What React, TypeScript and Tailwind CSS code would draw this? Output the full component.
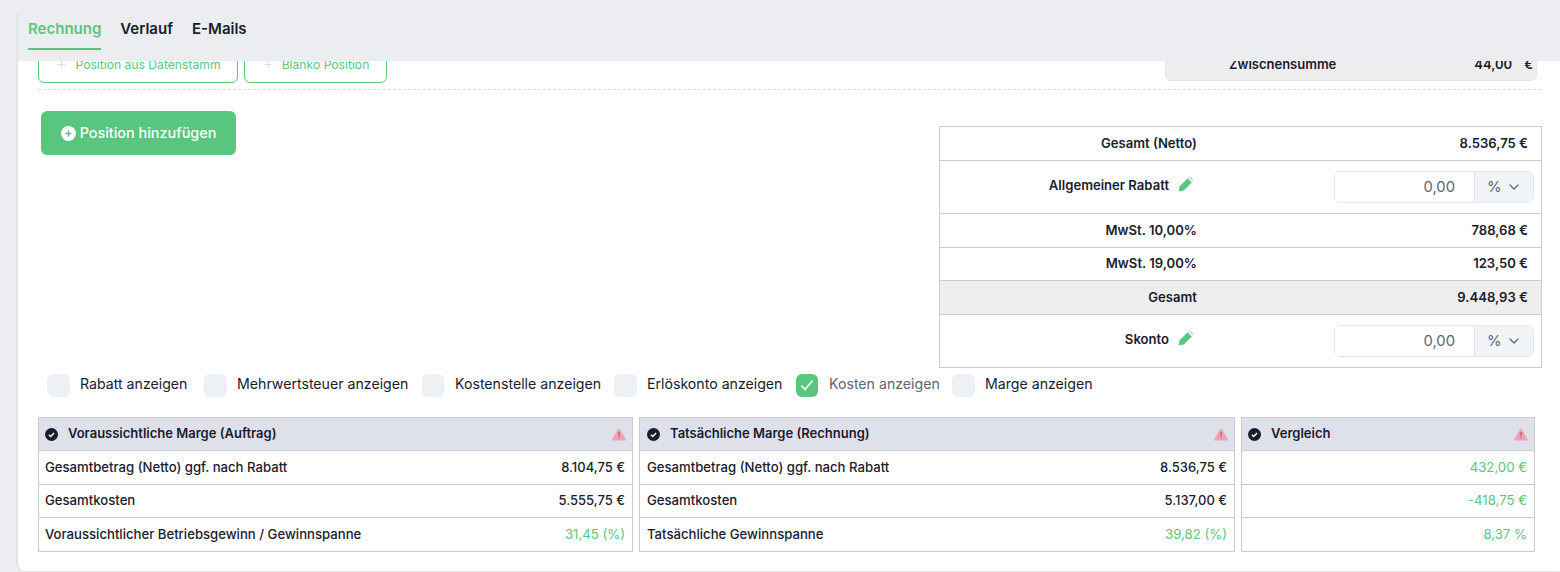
import { ChevronDown, Plus } from 'lucide-react';

const Pencil = () => (
  <svg width="16" height="16" viewBox="0 0 16 16" className="shrink-0">
    <path d="M.6 15.4l1-5.2 8-8 4.2 4.2-8 8z" fill="#59c680" />
    <path d="M10.4 1.6l.6-.6a1.5 1.5 0 0 1 2.1 0l1.9 1.9a1.5 1.5 0 0 1 0 2.1l-.6.6z" fill="#bfe8cd" />
  </svg>
);

const CheckCircle = () => (
  <svg width="13" height="13" viewBox="0 0 13 13" className="shrink-0">
    <circle cx="6.5" cy="6.5" r="6.5" fill="#1a1c2e" />
    <path d="M3.9 6.7l1.8 1.8 3.4-3.6" fill="none" stroke="#fff" strokeWidth="1.4" />
  </svg>
);

const Warning = () => (
  <svg width="14" height="13" viewBox="0 0 14 13" className="shrink-0">
    <path d="M7 .5a.9.9 0 0 1 .8.45l5.9 10.4a.8.8 0 0 1-.7 1.15H1a.8.8 0 0 1-.7-1.15L6.2.95A.9.9 0 0 1 7 .5z" fill="#eea3b5" />
    <rect x="6.5" y="4" width="1.1" height="4" fill="#e8365d" />
    <rect x="6.5" y="9" width="1.1" height="1.2" fill="#e8365d" />
  </svg>
);

const summaryRows = [
  { label: 'Gesamt (Netto)', value: '8.536,75 €', h: 'h-[33px]' },
  { label: 'Allgemeiner Rabatt', input: true, h: 'h-[53px]' },
  { label: 'MwSt. 10,00%', value: '788,68 €', h: 'h-[34px]' },
  { label: 'MwSt. 19,00%', value: '123,50 €', h: 'h-[33px]' },
  { label: 'Gesamt', value: '9.448,93 €', h: 'h-[34px]', grey: true },
  { label: 'Skonto', input: true, h: 'h-[53px]' },
];

const checks = [
  { label: 'Rabatt anzeigen', box: 'w-[23px]', gap: 'gap-[10px]', w: 'w-[157px]' },
  { label: 'Mehrwertsteuer anzeigen', box: 'w-[23px]', gap: 'gap-[10px]', w: 'w-[218px]' },
  { label: 'Kostenstelle anzeigen', box: 'w-[22px]', gap: 'gap-[11px]', w: 'w-[192px]' },
  { label: 'Erlöskonto anzeigen', box: 'w-[23px]', gap: 'gap-[10px]', w: 'w-[182px]' },
  { label: 'Kosten anzeigen', box: 'w-[22px]', gap: 'gap-[11px]', w: 'w-[156px]', on: true },
  { label: 'Marge anzeigen', box: 'w-[23px]', gap: 'gap-[10px]', w: 'w-[160px]' },
];

const marginTables = [
  {
    title: 'Voraussichtliche Marge (Auftrag)',
    pad: 'pl-[6px]',
    rows: [
      ['Gesamtbetrag (Netto) ggf. nach Rabatt', '8.104,75 €'],
      ['Gesamtkosten', '5.555,75 €'],
      ['Voraussichtlicher Betriebsgewinn / Gewinnspanne', '31,45 (%)', true],
    ],
  },
  {
    title: 'Tatsächliche Marge (Rechnung)',
    pad: 'pl-[7px]',
    rows: [
      ['Gesamtbetrag (Netto) ggf. nach Rabatt', '8.536,75 €'],
      ['Gesamtkosten', '5.137,00 €'],
      ['Tatsächliche Gewinnspanne', '39,82 (%)', true],
    ],
  },
  {
    title: 'Vergleich',
    pad: 'pl-[6px]',
    rows: [
      ['', '432,00 €', true],
      ['', '-418,75 €', true],
      ['', '8,37 %', true],
    ],
  },
];

const rowHeights = ['h-[34px]', 'h-[33px]', 'h-[34px]'];

function PercentInput() {
  return (
    <div className="flex h-[32px] w-[200px] overflow-hidden rounded-md border border-[#e4e8ee] text-[14.8px] font-normal text-[#5f6478]">
      <div className="flex flex-1 items-center justify-end bg-white pr-[19px]">0,00</div>
      <div className="flex w-[59px] items-center gap-[4px] border-l border-[#e4e8ee] bg-[#f2f5f8] pl-[12px]">
        %
        <ChevronDown size={16} strokeWidth={1.8} />
      </div>
    </div>
  );
}

export default function App() {
  return (
    <div className="h-[572px] overflow-hidden bg-[#edeef2] pl-[18px] pt-[14px] font-['Inter',sans-serif] text-[#1a1c2e]">
      <div className="h-[557px] rounded-bl-lg bg-white shadow-[-2px_0_2px_rgba(0,0,0,0.05)]">
        <div className="relative z-10 flex h-[47px] items-start gap-[19px] bg-[#ecedf1] pl-[10px] pt-[1px]">
          <div className="border-b-2 border-[#59c680] pb-[9px] pt-[4px] text-[15px] leading-[20px] font-semibold text-[#59c680]">Rechnung</div>
          <div className="pt-[4px] text-[15px] leading-[20px] font-semibold">Verlauf</div>
          <div className="pt-[4px] text-[15px] leading-[20px] font-semibold">E-Mails</div>
        </div>

        <div className="-mt-[21px] flex h-[43px] items-start justify-between pl-[20px] pr-[23px]">
          <div className="flex gap-[6px]">
            <button className="flex h-[43px] w-[200px] items-end justify-center gap-[7px] rounded-md border border-[#59c680] pb-[9px] text-[12.15px] leading-[16px] text-[#59c680]">
              <Plus size={13} strokeWidth={1.3} className="mb-[2px] text-[#b5e5c6]" />
              Position aus Datenstamm
            </button>
            <button className="flex h-[43px] w-[143px] items-end justify-center gap-[7px] rounded-md border border-[#59c680] pb-[9px] text-[12.15px] leading-[16px] text-[#59c680]">
              <Plus size={13} strokeWidth={1.3} className="mb-[2px] text-[#b5e5c6]" />
              Blanko Position
            </button>
          </div>
          <div className="flex h-[41px] w-[372px] items-end rounded-b-md border border-[#e4e6ec] bg-[#eeeeee] pb-[8px] pl-[63px] pr-[3px] text-[13px] leading-[16px] font-semibold">
            <span>Zwischensumme</span>
            <span className="ml-auto mr-[2px]">44,00</span>
            <span className="ml-[10px]">€</span>
          </div>
        </div>

        <div className="ml-[20px] mr-[19px] mt-[6px] border-t border-dashed border-[#d8dde2]" />

        <div className="flex items-start justify-between pl-[23px] pr-[18px] pt-[21px]">
          <button className="flex h-[44px] w-[195px] items-center justify-center gap-[4px] rounded-md bg-[#59c680] text-[14.4px] font-medium text-white">
            <svg width="15" height="15" viewBox="0 0 15 15">
              <circle cx="7.5" cy="7.5" r="7.5" fill="#fff" />
              <path d="M7.5 4.5v6M4.5 7.5h6" stroke="#59c680" strokeWidth="1.5" />
            </svg>
            Position hinzufügen
          </button>

          <div className="mt-[15px] w-[603px] border border-[#cccccc] text-[13.1px] font-semibold">
            {summaryRows.map((row, i) => (
              <div
                key={row.label}
                className={`flex ${row.h} ${i > 0 ? 'border-t border-[#cccccc]' : ''} ${row.grey ? 'bg-[#eeeeee]' : ''} ${row.input ? 'items-start' : 'items-center'}`}
              >
                <div className={`flex w-[257px] justify-end gap-[9px] ${row.input ? 'pr-[3px] pt-[15px]' : ''}`}>
                  {row.label}
                  {row.input ? <Pencil /> : null}
                </div>
                <div className={`ml-auto ${row.input ? 'mr-[7px] mt-[10px]' : 'mr-[13px]'}`}>
                  {row.input ? <PercentInput /> : row.value}
                </div>
              </div>
            ))}
          </div>
        </div>

        <div className="mt-[5px] flex h-[24px] items-center pl-[29px] text-[14.15px]">
          {checks.map((c) => (
            <label key={c.label} className={`flex shrink-0 items-center ${c.w} ${c.gap}`}>
              <span className={`flex h-[23px] ${c.box} items-center justify-center rounded-md ${c.on ? 'bg-[#59c680]' : 'bg-[#edf0f4]'}`}>
                {c.on ? (
                  <svg width="14" height="12" viewBox="0 0 14 12">
                    <path d="M1.5 6.5l3.5 4L12.5 1.5" fill="none" stroke="#fff" strokeWidth="1.5" />
                  </svg>
                ) : null}
              </span>
              <span className={`-mt-[2px] ${c.on ? 'text-[#5f6478]' : ''}`}>{c.label}</span>
            </label>
          ))}
        </div>

        <div className="ml-[20px] mt-[20px] grid w-[1497px] grid-cols-[595px_596px_294px] gap-[6px] text-[13px] font-medium">
          {marginTables.map((t) => (
            <div key={t.title} className="border border-[#cccccc]">
              <div className={`flex h-[32px] items-center gap-[10px] bg-[#dfe1ea] pr-[6px] ${t.pad}`}>
                <CheckCircle />
                <span className="font-semibold">{t.title}</span>
                <span className="ml-auto"><Warning /></span>
              </div>
              {t.rows.map((r, i) => (
                <div key={i} className={`flex items-center justify-between border-t border-[#cccccc] pr-[7px] ${t.pad} ${rowHeights[i]}`}>
                  <span className="text-[13.15px]">{r[0]}</span>
                  <span className={r[2] ? 'text-[13.2px] font-normal text-[#59c680]' : ''}>{r[1]}</span>
                </div>
              ))}
            </div>
          ))}
        </div>
      </div>
    </div>
  );
}
